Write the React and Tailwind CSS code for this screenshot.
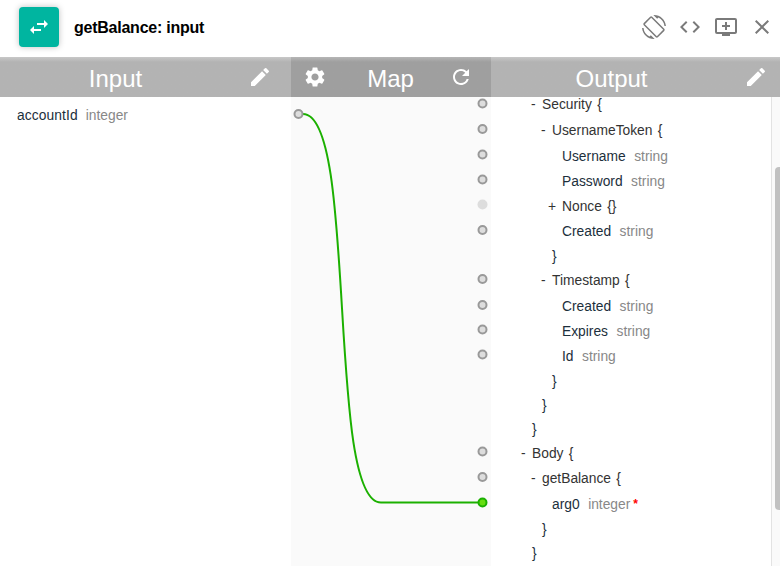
import React from "react";
import {
  MdScreenRotation,
  MdCode,
  MdAddToQueue,
  MdClose,
  MdEdit,
  MdSettings,
  MdRefresh,
  MdSwapHoriz,
} from "react-icons/md";

const rows = [
  { sign: "-", name: "Security {", pad: "pl-[40px]", h: "h-[26px]", group: true },
  { sign: "-", name: "UsernameToken {", pad: "pl-[50px]", h: "h-[26px]", group: true },
  { name: "Username", type: "string", pad: "pl-[71px]", h: "h-[25px]" },
  { name: "Password", type: "string", pad: "pl-[71px]", h: "h-[25px]" },
  { sign: "+", name: "Nonce {}", pad: "pl-[57px]", h: "h-[25px]", group: true },
  { name: "Created", type: "string", pad: "pl-[71px]", h: "h-[25px]" },
  { name: "}", pad: "pl-[61px]", h: "h-[24px]" },
  { sign: "-", name: "Timestamp {", pad: "pl-[50px]", h: "h-[26px]", group: true },
  { name: "Created", type: "string", pad: "pl-[71px]", h: "h-[25px]" },
  { name: "Expires", type: "string", pad: "pl-[71px]", h: "h-[25px]" },
  { name: "Id", type: "string", pad: "pl-[71px]", h: "h-[25px]" },
  { name: "}", pad: "pl-[61px]", h: "h-[24px]" },
  { name: "}", pad: "pl-[51px]", h: "h-[24px]" },
  { name: "}", pad: "pl-[41px]", h: "h-[24px]" },
  { sign: "-", name: "Body {", pad: "pl-[30px]", h: "h-[25px]", group: true },
  { sign: "-", name: "getBalance {", pad: "pl-[40px]", h: "h-[26px]", group: true },
  { name: "arg0", type: "integer", required: true, pad: "pl-[61px]", h: "h-[25px]" },
  { name: "}", pad: "pl-[51px]", h: "h-[24px]" },
  { name: "}", pad: "pl-[41px]", h: "h-[24px]" },
];

const ports = [6.5, 32, 57.5, 82.5, 133, 182, 208, 232.5, 257.5, 354.5, 380];

function Row({ row }) {
  return (
    <div className={`flex shrink-0 leading-6 whitespace-pre ${row.pad} ${row.h}`}>
      {row.sign && (
        <span className={`shrink-0 text-[#333] ${row.sign === "+" ? "w-[14px]" : "w-[11px]"}`}>
          {row.sign}
        </span>
      )}
      <span className={row.group ? "text-[#333] [word-spacing:1.5px]" : "text-[#1c2f3c]"}>
        {row.name}
      </span>
      {row.type && <span className="ml-[8.5px] text-[#888]">{row.type}</span>}
      {row.required && <span className="ml-[3px] text-[12px] leading-[22px] font-bold text-[#f00]">*</span>}
    </div>
  );
}

export default function App() {
  return (
    <div className="flex h-[566px] w-[780px] flex-col overflow-hidden bg-white font-['Liberation_Sans',Arial,sans-serif] text-[13.8px]">
      <header className="flex h-[57px] shrink-0 items-center pb-[3px] pl-[19px] pr-[6px]">
        <div className="flex h-10 w-10 items-center justify-center rounded-[4px] bg-[#00b5a0] text-white shadow-[0_0_6px_rgba(0,0,0,0.25)]">
          <MdSwapHoriz size={24} />
        </div>
        <h1 className="ml-[15px] flex-1 pt-[2px] text-[16px] font-bold tracking-[-0.24px] text-black">
          getBalance: input
        </h1>
        <div className="flex items-center gap-3 text-[#7a7a7a]">
          <MdScreenRotation size={24} />
          <MdCode size={24} />
          <MdAddToQueue size={24} />
          <MdClose size={24} />
        </div>
      </header>

      <div className="flex min-h-0 flex-1">
        <section className="flex w-[291px] flex-col">
          <div className="flex h-10 shrink-0 items-center bg-[#b3b3b3] bg-linear-to-b from-[#c8c8c8] to-[#b3b3b3] to-[5px] pr-[19px] text-white">
            <h2 className="flex-1 pl-[3px] pt-[3px] text-center text-[24px] leading-none [text-indent:-20px]">
              Input
            </h2>
            <MdEdit size={24} />
          </div>
          <div className="flex pl-[17px] pt-[7px] leading-6">
            <span className="tracking-[0.1px] text-[#1c2f3c]">accountId</span>
            <span className="ml-2 text-[#888]">integer</span>
          </div>
        </section>

        <section className="flex w-[200px] flex-col bg-[#fafafa]">
          <div className="flex h-10 shrink-0 items-center bg-[#9f9f9f] bg-linear-to-b from-[#b6b6b6] to-[#9f9f9f] to-[5px] pl-[11.5px] pr-[18.5px] text-white">
            <MdSettings size={24} />
            <h2 className="flex-1 pl-[6px] pt-[3px] text-center text-[24px] leading-none">Map</h2>
            <MdRefresh size={24} />
          </div>
          <svg width="200" height="469" viewBox="0 0 200 469" fill="none">
            <path
              d="M12 17C67 17 35 405.500 90 405.500H191"
              stroke="#1bb000"
              strokeWidth="2"
            />
            <circle cx="7.500" cy="17" r="4" fill="#ddd" stroke="#999" strokeWidth="2" />
            {ports.map((y) => (
              <circle key={y} cx="191.500" cy={y} r="4" fill="#ddd" stroke="#999" strokeWidth="2" />
            ))}
            <circle cx="191.500" cy="107.500" r="5" fill="#ddd" />
            <circle cx="191.500" cy="405.500" r="4" fill="#66dd11" stroke="#1bb000" strokeWidth="2" />
          </svg>
        </section>

        <section className="flex w-[289px] flex-col">
          <div className="flex h-10 shrink-0 items-center bg-[#b3b3b3] bg-linear-to-b from-[#c8c8c8] to-[#b3b3b3] to-[5px] pr-[12px] text-white">
            <h2 className="flex-1 pt-[3px] text-center text-[24px] leading-none [text-indent:-12px]">
              Output
            </h2>
            <MdEdit size={24} />
          </div>
          <div className="flex min-h-0 flex-1">
            <div className="flex flex-1 flex-col overflow-hidden">
              <div className="-mt-[4px] flex flex-col">
                {rows.map((row, i) => (
                  <Row key={i} row={row} />
                ))}
              </div>
            </div>
            <div className="w-[9px] overflow-hidden border-l border-[#e3e3e3] bg-[#fafafa] pl-[3px] pt-[70px]">
              <div className="h-[343px] w-2 rounded-[4px] bg-[#c1c1c1]" />
            </div>
          </div>
        </section>
      </div>
    </div>
  );
}
